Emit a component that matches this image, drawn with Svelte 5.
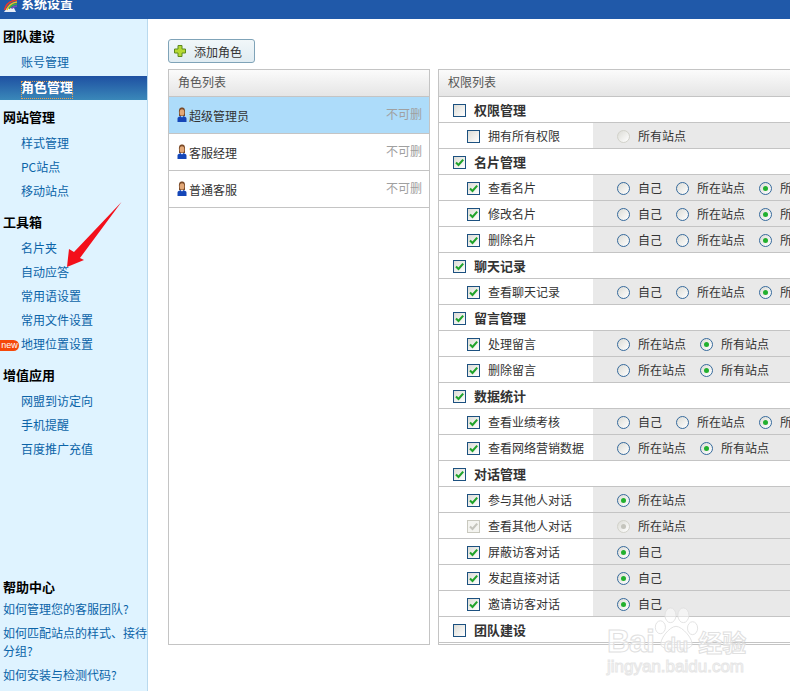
<script lang="ts">
  const FULL = ['自己', '所在站点', '所有站点'];
  const SITES = ['所在站点', '所有站点'];

  type Perm = {
    name: string;
    group?: boolean;
    checked?: boolean;
    disabled?: boolean;
    options?: string[];
    selected?: number;
  };

  const navGroups = [
    { title: '团队建设', links: ['账号管理', '角色管理'] },
    { title: '网站管理', links: ['样式管理', 'PC站点', '移动站点'] },
    { title: '工具箱', links: ['名片夹', '自动应答', '常用语设置', '常用文件设置', '地理位置设置'] },
    { title: '增值应用', links: ['网盟到访定向', '手机提醒', '百度推广充值'] },
  ];

  const helpLinks = ['如何管理您的客服团队?', '如何匹配站点的样式、接待分组?', '如何安装与检测代码?'];

  const roles = ['超级管理员', '客服经理', '普通客服'];

  const perms: Perm[] = [
    { name: '权限管理', group: true },
    { name: '拥有所有权限', options: ['所有站点'], selected: -1, disabled: true },
    { name: '名片管理', group: true, checked: true },
    { name: '查看名片', checked: true, options: FULL, selected: 2 },
    { name: '修改名片', checked: true, options: FULL, selected: 2 },
    { name: '删除名片', checked: true, options: FULL, selected: 2 },
    { name: '聊天记录', group: true, checked: true },
    { name: '查看聊天记录', checked: true, options: FULL, selected: 2 },
    { name: '留言管理', group: true, checked: true },
    { name: '处理留言', checked: true, options: SITES, selected: 1 },
    { name: '删除留言', checked: true, options: SITES, selected: 1 },
    { name: '数据统计', group: true, checked: true },
    { name: '查看业绩考核', checked: true, options: FULL, selected: 2 },
    { name: '查看网络营销数据', checked: true, options: SITES, selected: 1 },
    { name: '对话管理', group: true, checked: true },
    { name: '参与其他人对话', checked: true, options: ['所在站点'], selected: 0 },
    { name: '查看其他人对话', checked: true, disabled: true, options: ['所在站点'], selected: 0 },
    { name: '屏蔽访客对话', checked: true, options: ['自己'], selected: 0 },
    { name: '发起直接对话', checked: true, options: ['自己'], selected: 0 },
    { name: '邀请访客对话', checked: true, options: ['自己'], selected: 0 },
    { name: '团队建设', group: true },
  ];
</script>

{#snippet checkbox(checked: boolean | undefined, off: boolean)}
  <span class="check" class:check--off={off && checked}>
    {#if checked}
      <svg viewBox="0 0 11 11" width="11" height="11" aria-hidden="true">
        <path d="M2 5.5 L4.5 8 L9.2 2.6" fill="none" stroke={off ? '#c4c4bc' : '#1fa32a'} stroke-width="2.1" />
      </svg>
    {/if}
  </span>
{/snippet}

<div class="page">
  <header class="topbar">
    <svg class="topbar__logo" viewBox="0 0 16 14" width="16" height="14" aria-hidden="true">
      <path d="M2 13 L14 13 L12 9 L5 9 Z" fill="#e8eef6" />
      <path d="M2.5 11 C4 5 9 1.5 15 1" fill="none" stroke="#e23a2e" stroke-width="1.6" />
      <path d="M5 11 C6 7 10 3.5 15 3" fill="none" stroke="#f4c21f" stroke-width="1.6" />
      <path d="M7 10 C8 8 11 5.5 15 5" fill="none" stroke="#3fb04a" stroke-width="1.6" />
      <path d="M9.5 9.5 C10.5 8.5 12.5 7.2 15 7" fill="none" stroke="#7a4fc0" stroke-width="1.6" />
    </svg>
    <span class="topbar__title">系统设置</span>
  </header>

  <div class="layout">
    <aside class="sidebar">
      <nav>
        {#each navGroups as group}
          <div class="nav-group">
            <h3>{group.title}</h3>
            {#each group.links as link}
              <div class="nav-link" class:nav-link--active={link === '角色管理'}>
                {#if link === '地理位置设置'}<span class="badge">new</span>{/if}
                <span class="nav-link__text">{link}</span>
              </div>
            {/each}
          </div>
        {/each}
      </nav>

      <div class="help">
        <h3>帮助中心</h3>
        {#each helpLinks as link}
          <p>{link}</p>
        {/each}
      </div>
    </aside>

    <main class="content">
      <button type="button" class="add-btn">
        <svg viewBox="0 0 12 12" width="12" height="12" aria-hidden="true">
          <path d="M4 .5 H8 V4 H11.5 V8 H8 V11.5 H4 V8 H.5 V4 H4 Z" fill="#b5d934" stroke="#5d8a1e" />
        </svg>
        添加角色
      </button>

      <div class="panels">
        <section class="panel panel--roles">
          <div class="panel__head">角色列表</div>
          {#each roles as role, i}
            <div class="role" class:role--active={i === 0}>
              <svg viewBox="0 0 10 16" width="10" height="16" aria-hidden="true">
                <path d="M2 6 C1.6 1.5 3 .5 5 .5 C7 .5 8.4 1.5 8 6 L8 9 L2 9 Z" fill="#7a4a28" />
                <ellipse cx="5" cy="5.4" rx="2.3" ry="3.2" fill="#e2a878" />
                <path d="M.5 15 L.5 11.5 C.5 10 2.5 9.5 3.5 9 L5 10.5 L6.5 9 C7.5 9.5 9.5 10 9.5 11.5 L9.5 15 Z" fill="#1446b8" />
              </svg>
              <span class="role__name">{role}</span>
              <span class="role__tag">不可删</span>
            </div>
          {/each}
        </section>

        <section class="panel panel--perms">
          <div class="panel__head">权限列表</div>
          {#each perms as perm}
            {#if perm.group}
              <div class="perm perm--group">
                {@render checkbox(perm.checked, false)}
                <b>{perm.name}</b>
              </div>
            {:else}
              <div class="perm">
                <div class="perm__name">
                  {@render checkbox(perm.checked, !!perm.disabled)}
                  <span>{perm.name}</span>
                </div>
                <div class="perm__scope">
                  {#each perm.options ?? [] as option, i}
                    <span class="radio" class:radio--off={perm.disabled}>
                      {#if i === perm.selected}<i></i>{/if}
                    </span>
                    <span class="radio-label">{option}</span>
                  {/each}
                </div>
              </div>
            {/if}
          {/each}
        </section>
      </div>
    </main>
  </div>

  <svg class="arrow" viewBox="0 0 140 80" width="140" height="80" aria-hidden="true">
    <polygon points="121.5,2 80,58 84,60 67,67 69,49 74,52" fill="#f30f1a" />
  </svg>

  <div class="watermark" aria-hidden="true">
    <svg class="watermark__paw" viewBox="0 0 50 50" width="46" height="46">
      <g fill="#fff" fill-opacity="0.5" stroke="#e0e0e0">
        <ellipse cx="8" cy="22" rx="5.5" ry="7" />
        <ellipse cx="19" cy="9" rx="6" ry="8" />
        <ellipse cx="33" cy="9" rx="6" ry="8" />
        <ellipse cx="43" cy="23" rx="5.5" ry="7" />
        <path d="M25 21 C18 21 6 36 9 42 C12 47 20 44 25 44 C30 44 39 47 42 42 C45 36 32 21 25 21 Z" />
      </g>
    </svg>
    <div class="watermark__brand"><span class="wm-bai">Bai</span><span class="wm-du">du</span><span class="wm-jy">经验</span></div>
    <div class="watermark__url">jingyan.baidu.com</div>
  </div>
</div>

<style>
  :global(body) {
    margin: 0;
    background: #fff;
  }

  .page {
    position: relative;
    display: flex;
    flex-direction: column;
    width: 790px;
    height: 691px;
    overflow: hidden;
    font-family: "Noto Sans CJK SC", "Liberation Sans", sans-serif;
    font-size: 12px;
    color: #333;
  }

  .topbar {
    display: flex;
    flex: none;
    gap: 3px;
    height: 19px;
    padding-left: 2px;
    overflow: hidden;
    background: #2059a9;
  }

  .topbar__logo {
    flex: none;
    margin-top: -1px;
  }

  .topbar__title {
    margin-top: -6px;
    font-size: 13px;
    font-weight: 700;
    line-height: 18px;
    color: #fff;
  }

  .layout {
    display: flex;
    flex: 1;
    min-height: 0;
  }

  .sidebar {
    display: flex;
    flex: none;
    flex-direction: column;
    justify-content: space-between;
    box-sizing: border-box;
    width: 148px;
    padding-top: 3px;
    background: #dff3ff;
    border-right: 1px solid #b9d9ee;
  }

  .nav-group + .nav-group {
    margin-top: 3px;
  }

  .sidebar h3 {
    margin: 0;
    padding: 0 0 2px 3px;
    font-size: 13px;
    font-weight: 700;
    line-height: 28px;
    color: #000;
  }

  .nav-link {
    position: relative;
    height: 24px;
    padding-left: 21px;
    line-height: 20px;
    color: #0b64a8;
  }

  .nav-link--active {
    font-size: 13px;
    font-weight: 700;
    color: #fff;
    background: linear-gradient(#1e50a2, #3a88b9);
  }

  .nav-link--active .nav-link__text {
    display: inline-block;
    height: 18px;
    margin-top: 5px;
    outline: 1px dotted #e8a050;
    outline-offset: -1px;
    line-height: 12px;
    vertical-align: top;
  }

  .badge {
    position: absolute;
    top: 6px;
    left: 0;
    width: 19px;
    height: 11px;
    border-radius: 0 6px 6px 0;
    background: #f5480a;
    font-family: "Liberation Sans", sans-serif;
    font-size: 9px;
    line-height: 11px;
    text-align: center;
    color: #fff;
  }

  .help {
    padding-bottom: 4px;
  }

  .help h3 {
    padding-bottom: 0;
    line-height: 20px;
  }

  .help p {
    margin: 0;
    padding: 3px 0 3px 3px;
    line-height: 18px;
    color: #0b64a8;
  }

  .content {
    flex: 1;
    min-width: 0;
    padding: 20px 0 0 20px;
  }

  .add-btn {
    display: flex;
    align-items: center;
    gap: 8px;
    box-sizing: border-box;
    width: 87px;
    height: 24px;
    padding: 0 0 0 5px;
    border: 1px solid #7fa3b8;
    border-radius: 3px;
    background: linear-gradient(#f1f7f9, #e0ecf2);
    font: inherit;
    color: #333;
  }

  .panels {
    display: flex;
    gap: 8px;
    margin-top: 6px;
  }

  .panel {
    flex: none;
    box-sizing: border-box;
    height: 576px;
    overflow: hidden;
    border: 1px solid #c4c4c4;
  }

  .panel--roles {
    width: 262px;
  }

  .panel--perms {
    width: 460px;
  }

  .panel__head {
    box-sizing: border-box;
    height: 27px;
    padding-left: 9px;
    border-bottom: 1px solid #c4c4c4;
    background: linear-gradient(#fbfbfb, #e5e5e5);
    line-height: 23px;
    color: #555;
  }

  .role {
    display: flex;
    align-items: center;
    box-sizing: border-box;
    height: 37px;
    padding: 0 7px 0 8px;
    border-bottom: 1px solid #c4c4c4;
  }

  .role--active {
    background: #addcfa;
  }

  .role__name {
    margin-left: 2px;
  }

  .role__tag {
    margin: -4px 0 0 auto;
    color: #a0a0a0;
  }

  .perm {
    display: flex;
    box-sizing: border-box;
    height: 26px;
    border-bottom: 1px solid #c4c4c4;
    line-height: 24px;
  }

  .perm--group {
    align-items: center;
    padding: 1px 0 0 14px;
  }

  .perm--group b {
    margin-left: 8px;
    font-size: 13px;
  }

  .perm__name {
    display: flex;
    flex: none;
    align-items: center;
    gap: 8px;
    box-sizing: border-box;
    width: 154px;
    padding: 1px 0 0 28px;
  }

  .perm__scope {
    display: flex;
    flex: 1;
    align-items: center;
    padding: 1px 0 0 24px;
    background: #e9e9e9;
  }

  .check {
    display: flex;
    flex: none;
    align-items: center;
    justify-content: center;
    box-sizing: border-box;
    width: 13px;
    height: 13px;
    border: 1px solid #1c5180;
    background: linear-gradient(135deg, #dcdcd6, #fff);
  }

  .check--off {
    border-color: #c9c9bf;
    background: #f4f4f0;
  }

  .radio {
    display: flex;
    flex: none;
    align-items: center;
    justify-content: center;
    box-sizing: border-box;
    width: 13px;
    height: 13px;
    border: 1px solid #366a9c;
    border-radius: 50%;
    background: linear-gradient(135deg, #dcdcd6, #fff);
  }

  .radio i {
    width: 5px;
    height: 5px;
    border-radius: 50%;
    background: #22b02e;
  }

  .radio--off {
    border-color: #d2d2ca;
  }

  .radio--off i {
    background: #c4c4bc;
  }

  .radio-label {
    flex: none;
    margin: 0 14px 0 8px;
  }

  .arrow {
    position: absolute;
    top: 200px;
    left: 0;
    pointer-events: none;
  }

  .watermark {
    position: absolute;
    top: 606px;
    left: 604px;
    width: 150px;
    height: 72px;
    pointer-events: none;
    font-family: "Liberation Sans", sans-serif;
  }

  .watermark__paw {
    position: absolute;
    top: 1px;
    left: 49px;
  }

  .watermark__brand {
    position: absolute;
    top: 17px;
    left: 3px;
    display: flex;
    align-items: baseline;
    font-size: 32px;
    font-weight: 700;
    line-height: 36px;
    letter-spacing: -1px;
    color: rgba(255, 255, 255, 0.6);
    -webkit-text-stroke: 1px #e0e0e0;
  }

  .wm-du {
    margin-left: 10px;
    font-size: 20px;
    letter-spacing: 0;
  }

  .wm-jy {
    margin-left: 10px;
    font-family: "Noto Sans CJK SC", sans-serif;
    font-size: 24px;
    letter-spacing: 0;
  }

  .watermark__url {
    position: absolute;
    top: 51px;
    left: 3px;
    font-size: 17px;
    line-height: 20px;
    white-space: nowrap;
    color: #fff;
    -webkit-text-stroke: 1px #e6e6e6;
  }
</style>
